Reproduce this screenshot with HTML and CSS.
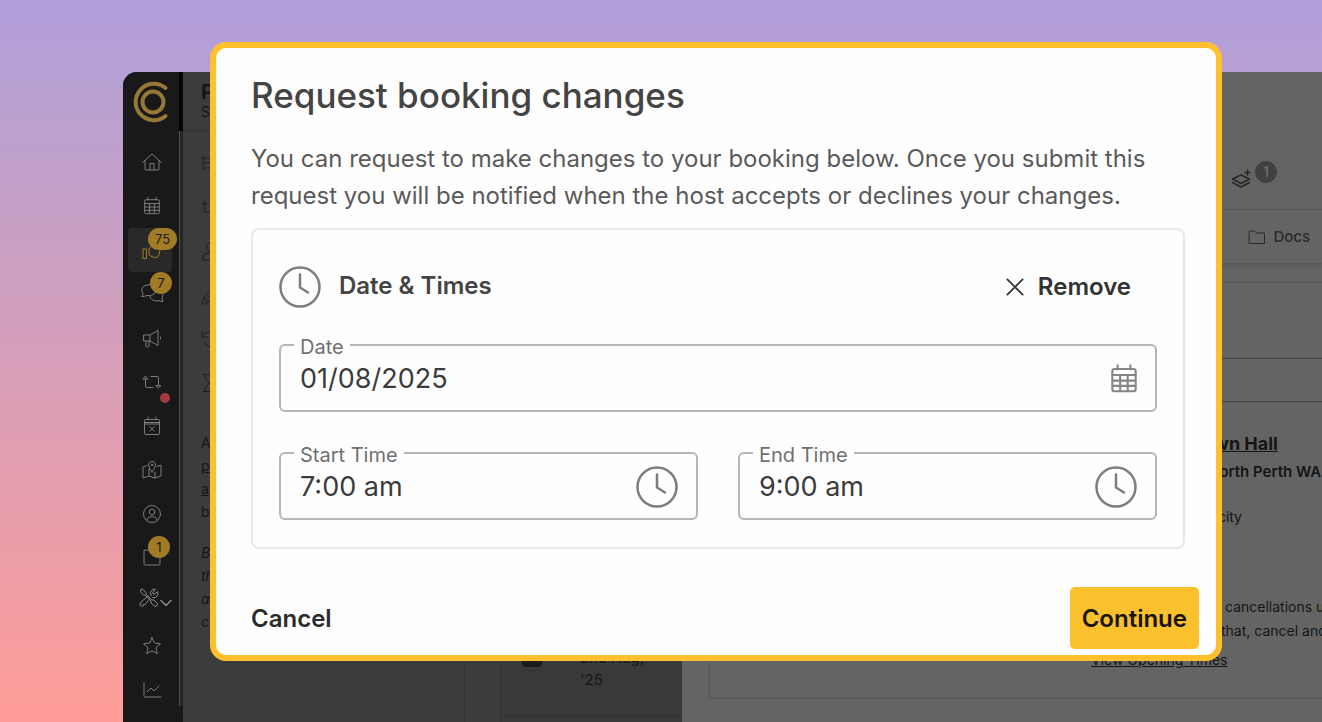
FILE: index.html
```html
<!DOCTYPE html>
<html lang="en">
<head>
<meta charset="utf-8">
<title>Request booking changes</title>
<link rel="stylesheet" href="styles.css">
</head>
<body>
<svg class="defs" aria-hidden="true">
  <symbol id="clock" viewBox="0 0 42 42"><circle cx="21" cy="21" r="19.5"/><path d="M21 8.500v13l8 5"/></symbol>
  <symbol id="calendar" viewBox="0 0 20 20"><path d="M6 1.500V4M14 1.500V4M3 7.500h14M3 11h14M3 14.300h14M7.600 7.500v10M12.300 7.500v10"/><rect x="2.700" y="3.700" width="14.600" height="14" rx="1.500"/></symbol>
  <symbol id="swap" viewBox="0 0 20 20"><path d="M3.500 6.800V14q0 1.500 1.500 1.500h6M1.200 6.800 3.500 4l2.300 2.800zM9 4.500h6q1.500 0 1.500 1.500v7.500M14.200 13.500h4.600L16.500 16z"/></symbol>
</svg>
<div class="app">
  <nav class="sidebar" aria-label="Main">
    <a class="brand" href="#" aria-label="Dashboard">
      <svg viewBox="0 0 42 42"><path d="M32.500 7A18.200 18.200 0 1 0 32.500 35"/><circle cx="20" cy="21" r="10.500"/></svg>
    </a>
    <a class="item" href="#" aria-label="Home"><svg viewBox="0 0 20 20"><path d="M.5 10.500 10 2l9.500 8.500M3 8.500V17q0 1 1 1h12q1 0 1-1V8.500M8 18v-6.500h4V18"/></svg></a>
    <a class="item" href="#" aria-label="Calendar"><svg><use href="#calendar"/></svg></a>
    <a class="item active" href="#" aria-label="Approvals"><svg viewBox="0 0 20 20"><path d="M1.500 9h3v9.500h-3zM7 9l4-5M7 9v6q4 3 8 2.500 2.500-2 3-7.500.3-3-2-3h-4"/></svg><span class="badge wide">75</span></a>
    <a class="item" href="#" aria-label="Messages"><svg class="large" viewBox="0 0 24 24"><path d="M2 14.500Q3.500 13 3 11.500 0 7 4 4q5-3 10 0 4 4 0 8-3.500 2.500-7.500 1.500-2 1.500-4.500 1zM10 14.500q1 4.500 7 4.500l2-.5q2 1.500 4 1l-1-3q2-4 0-7-2-3-6-3"/></svg><span class="badge">7</span></a>
    <a class="item" href="#" aria-label="Announcements"><svg viewBox="0 0 20 20"><path d="M2 7h6v6H2zM8 7l8-4.500v15L8 13M4 13v5q0 1 1.500 1T7 18v-5M18.500 9v2"/></svg></a>
    <a class="item" href="#" aria-label="Changes"><svg><use href="#swap"/></svg><span class="dot"></span></a>
    <a class="item" href="#" aria-label="Cancellations"><svg viewBox="0 0 20 20"><rect x="2.500" y="3.500" width="15" height="15" rx="1.500"/><path d="M6 1v2.500M14 1v2.500M2.500 6.500h15M2.500 8h15M7.700 10.500l4.600 4.600M12.300 10.500l-4.600 4.600"/></svg></a>
    <a class="item" href="#" aria-label="Map"><svg viewBox="0 0 20 20"><path d="M5 5.500 1 7v11l6-2 6 2 6-2V5l-4 1.500M7 16V9M13 18v-6M10 12Q6.500 7.500 6.500 5a3.500 3.500 0 0 1 7 0q0 2.500-3.500 7z"/><circle cx="10" cy="5" r=".8"/></svg></a>
    <a class="item" href="#" aria-label="Profile"><svg viewBox="0 0 20 20"><circle cx="10" cy="10" r="8.500"/><circle cx="10" cy="8" r="2.800"/><path d="M4.500 16q1-3.500 5.500-3.500t5.500 3.500"/></svg></a>
    <a class="item" href="#" aria-label="Orders"><svg viewBox="0 0 20 20"><path d="M2 2.500V16q0 1 1 1h14q1 0 1-1V2.500z"/></svg><span class="badge low">1</span></a>
    <a class="item tools" href="#" aria-label="Tools"><svg viewBox="0 0 20 20"><path d="M2 1.500 1.500 4l3 3H6l6 6v2l4 3.500q3 0 2.500-3L15 12h-2L7 6V4.500L4 1.500zM12 8Q10 4 13.500 1.500q2-.8 3 0L14 4v2h2l2.500-2.500q2 4-2 6-1.500.5-3 0M11 10.500 5 17.500q-2 1.500-3.500 0T2 14l6-5M4 16h.1"/></svg><svg class="chevron" viewBox="0 0 12 8"><path d="M1 1.500l5 5 5-5"/></svg></a>
    <a class="item" href="#" aria-label="Favourites"><svg viewBox="0 0 20 20"><path d="M10 1.500l2.500 5.500 6 .7-4.500 4 1.300 6L10 14.800l-5.300 2.900 1.300-6-4.500-4 6-.7z"/></svg></a>
    <a class="item" href="#" aria-label="Reports"><svg viewBox="0 0 20 20"><path d="M2 2.500V16q0 1 1 1h16M5 12l4-4 3 3 5-5"/></svg></a>
  </nav>
  <div class="rail"></div>
  <section class="panel">
    <header class="panel-head"><strong>P</strong><span>S</span></header>
    <div class="facts">
      <svg viewBox="0 0 20 20"><circle cx="2.500" cy="5" r="1.500"/><circle cx="2.500" cy="10" r="1.500"/><circle cx="2.500" cy="15" r="1.500"/><path d="M6 5h13M6 10h13M6 15h13"/></svg>
      <svg><use href="#swap"/></svg>
      <svg viewBox="0 0 20 20"><circle cx="10" cy="6" r="4.500"/><path d="M1.500 18.500q0-6.500 6-6.500h5q6 0 6 6.500z"/></svg>
      <svg viewBox="0 0 20 20"><path d="M1 19l1.500-6L14 1.500l4.500 4.500L7 17.500zM2.500 13 7 17.500M4.500 15 15 5"/></svg>
      <svg viewBox="0 0 20 20"><path d="M1 2v6h6M1 8q5-8 13-4M3 13q5 8 12 4"/></svg>
      <svg viewBox="0 0 20 20"><path d="M2 1.500h16M2 18.500h16M4 1.500q0 6 5 8.500-5 2.500-5 8.500M16 1.500q0 6-5 8.500 5 2.500 5 8.500"/></svg>
    </div>
    <p class="note">A<br><a href="#">p</a><br><a href="#">a</a><br>b</p>
    <p class="note"><em>B<br>th<br>a<br>c</em></p>
  </section>
  <section class="schedule">
    <div class="schedule-row"><input type="checkbox" aria-label="End Aug, '25"><span>End Aug,<br>'25</span></div>
  </section>
  <main class="main">
    <div class="toolbar"><svg viewBox="0 0 20 20"><path d="M1.500 10 10 6l8.500 4-8.500 4.500zM1.500 13.500 10 18l8.500-4.500M16.500 1v5M14 3.500h5"/></svg><span class="count">1</span></div>
    <div class="tabs"><a href="#"><svg viewBox="0 0 20 20"><path d="M2.500 4h5l2 2h8v10.500h-15z"/></svg>Docs</a></div>
    <article class="card">
      <div class="card-head"></div>
      <div class="card-sub"></div>
      <div class="details">
        <a class="venue" href="#">Town Hall</a>
        <strong class="address">North Perth WA</strong>
        <span class="capacity">Capacity</span>
        <p class="policy">cancellations u</p>
        <p class="policy-next">that, cancel and</p>
        <a class="hours" href="#">View Opening Times</a>
      </div>
    </article>
  </main>
</div>
<div class="overlay">
  <form class="modal" role="dialog" aria-labelledby="dialog-title">
    <h1 id="dialog-title">Request booking changes</h1>
    <p class="intro">You can request to make changes to your booking below. Once you submit this request you will be notified when the host accepts or declines your changes.</p>
    <section class="box">
      <div class="box-head">
        <svg class="clock"><use href="#clock"/></svg>
        <h2>Date &amp; Times</h2>
        <button class="remove" type="button"><svg viewBox="0 0 20 20"><path d="M1.500 1.500l17 17M18.500 1.500l-17 17"/></svg>Remove</button>
      </div>
      <div class="field"><label for="date">Date</label><input id="date" type="text" value="01/08/2025"><svg class="cal"><use href="#calendar"/></svg></div>
      <div class="times">
        <div class="field"><label for="start">Start Time</label><input id="start" type="text" value="7:00 am"><svg class="clock"><use href="#clock"/></svg></div>
        <div class="field"><label for="end">End Time</label><input id="end" type="text" value="9:00 am"><svg class="clock"><use href="#clock"/></svg></div>
      </div>
    </section>
    <footer class="actions"><button class="cancel" type="button">Cancel</button><button class="continue" type="submit">Continue</button></footer>
  </form>
</div>
</body>
</html>
```
FILE: styles.css
```css
* { box-sizing: border-box; }
body {
  margin: 0;
  min-height: 100vh;
  overflow: hidden;
  font-family: Inter, "Liberation Sans", sans-serif;
  background: linear-gradient(180deg, #b19ddb 0%, #b6a0d3 10%, #ff9d98 100%);
}
h1, h2, p { margin: 0; }
a { color: inherit; }
svg { fill: none; stroke: currentColor; stroke-linecap: round; stroke-linejoin: round; flex: none; }
button, input { font: inherit; color: inherit; border: 0; background: none; padding: 0; margin: 0; }
.defs { position: absolute; width: 0; height: 0; }

/* Dimmed application window */
.app {
  display: grid;
  grid-template-columns: 56px 4px 282px 217px 1fr;
  height: calc(100vh - 72px);
  margin: 72px 0 0 123px;
  border-radius: 14px 0 0 0;
  overflow: hidden;
  background: #3c3c3c;
  color: #151515;
}
.sidebar { display: flex; flex-direction: column; background: #191919; color: #7c7c7c; }
.brand { height: 68px; padding: 9px 0 0 10px; color: #967837; }
.brand svg { width: 42px; height: 42px; stroke-width: 4; }
.item { position: relative; display: flex; align-items: center; justify-content: center; height: 44px; margin: 0 7px 0 5px; padding-left: 4px; border-radius: 4px; flex: none; }
.item svg { width: 20px; height: 20px; }
.item .large { width: 24px; height: 24px; }
.item.active { background: #292929; color: #a37b24; }
.item.tools { justify-content: flex-start; align-items: flex-start; margin-right: 0; padding: 8px 0 0 11px; color: #8c8c8c; }
.tools .chevron { width: 12px; height: 8px; margin-top: 11px; margin-left: 1px; stroke-width: 1.5; }
.badge { position: absolute; top: 0; left: 22px; width: 22px; height: 22px; border-radius: 11px; background: #a17b26; color: #1b1b1b; font-size: 13px; line-height: 22px; text-align: center; }
.badge.wide { left: 20px; width: 29px; }
.badge.low { left: 20px; }
.dot { position: absolute; top: 33px; left: 32px; width: 10px; height: 10px; border-radius: 50%; background: #a33a3c; }
.rail { border-top: 59px solid #050505; border-bottom: 16px solid #181818; background: linear-gradient(90deg, #505050 1px, #262626 1px); }

.panel { border-right: 1px solid #343434; }
.panel-head { display: flex; flex-direction: column; height: 60px; padding: 9px 18px; border-bottom: 2px solid #343434; font-size: 14px; line-height: 18px; }
.panel-head strong { font-size: 20px; line-height: 22px; }
.facts { display: grid; grid-auto-rows: 44px; align-items: center; padding: 9px 18px; color: #1e1e1e; }
.facts svg { width: 20px; height: 20px; }
.note { padding: 0 18px; margin-bottom: 18px; font-size: 14px; line-height: 23px; }
.facts + .note { margin-top: 17px; }

.schedule { display: flex; flex-direction: column; justify-content: flex-end; margin-left: 35px; padding-bottom: 6px; border-left: 1px solid #333; background: #393939; }
.schedule-row { display: flex; gap: 38px; padding: 0 20px 24px 21px; border-bottom: 1px solid #303030; font-size: 15px; line-height: 22px; }
.schedule-row input { appearance: none; width: 20px; height: 20px; border-radius: 3px; background: #1c1c1c; }

.main { display: flex; flex-direction: column; min-width: 0; background: #646464; }
.toolbar { display: flex; justify-content: flex-end; gap: 4px; height: 138px; padding: 89px 45px 0 0; border-bottom: 1px solid #575757; color: #282828; }
.toolbar svg { width: 20px; height: 20px; margin-top: 8px; stroke-width: 1.5; }
.count { width: 22px; height: 22px; border-radius: 50%; background: #404040; color: #777; font-size: 14px; line-height: 22px; text-align: center; }
.tabs { display: flex; justify-content: flex-end; align-items: center; height: 53px; padding-right: 12px; box-shadow: 0 3px 5px #585858; color: #2b2b2b; font-size: 15px; font-weight: 500; }
.tabs a { display: flex; align-items: center; gap: 6px; text-decoration: none; }
.tabs svg { width: 20px; height: 20px; }
.card { height: 417px; margin: 19px 0 0 27px; border: solid #585858; border-width: 1px 0 1px 1px; border-radius: 4px 0 0 4px; }
.card-head { height: 76px; border-bottom: 1px solid #444; }
.card-sub { height: 43px; border-bottom: 1px solid #444; }
.details { display: flex; flex-direction: column; width: 231px; margin: 28px 0 0 auto; font-size: 14px; line-height: 24px; white-space: nowrap; }
.venue { width: 187px; text-align: right; font-size: 18px; font-weight: 700; line-height: 28px; }
.address { padding-left: 117px; font-size: 15px; font-weight: 600; line-height: 28px; }
.capacity { width: 151px; margin-top: 19px; text-align: right; }
.policy { margin-top: 66px; padding-left: 134px; }
.policy-next { padding-left: 130px; }
.hours { margin-top: 5px; }

/* Dialog */
.overlay { position: absolute; top: 42px; left: 210px; right: 100px; }
.modal { padding: 24px 17px 6px 35px; border: 6px solid #ffc02d; border-radius: 16px; background: #fefefe; color: #444; }
.modal h1 { font-size: 35px; font-weight: 500; line-height: 46px; }
.intro { margin: 22px 14px 0 0; color: #5a5a5a; font-size: 24px; line-height: 37px; }
.box { display: grid; gap: 40px; margin: 14px 14px 38px 0; padding: 32px 26px 27px; border: 2px solid #e8e8e8; border-radius: 8px; }
.box-head { display: flex; align-items: center; height: 50px; margin-bottom: -8px; }
.box h2 { margin-left: 18px; padding-bottom: 2px; font-size: 24px; font-weight: 600; line-height: 30px; }
.clock { width: 42px; height: 42px; color: #7c7c7c; stroke-width: 2.5; }
.remove { display: flex; align-items: center; gap: 14px; margin-left: auto; margin-right: 26px; color: #333; font-size: 24px; font-weight: 600; line-height: 30px; }
.remove svg { width: 18px; height: 18px; stroke-width: 2; }
.field { position: relative; display: flex; align-items: center; height: 68px; padding: 2px 18px 0 19px; border: 2px solid #b5b5b5; border-radius: 6px; }
.field label { position: absolute; top: -12px; left: 13px; padding: 0 6px; background: #fefefe; color: #707070; font-size: 20px; line-height: 26px; }
.field input { flex: 1; min-width: 0; width: 100%; color: #3b3b3b; font-size: 27px; line-height: 34px; }
.cal { width: 32px; height: 32px; margin-right: -3px; color: #858585; stroke-width: 1.3; }
.times { display: grid; grid-template-columns: 1fr 1fr; gap: 40px; }
.actions { display: flex; justify-content: space-between; align-items: center; color: #2b2b2b; font-size: 24px; font-weight: 600; }
.continue { height: 62px; padding: 0 12px; border-radius: 5px; background: #fbc02d; color: #18150a; }
```
